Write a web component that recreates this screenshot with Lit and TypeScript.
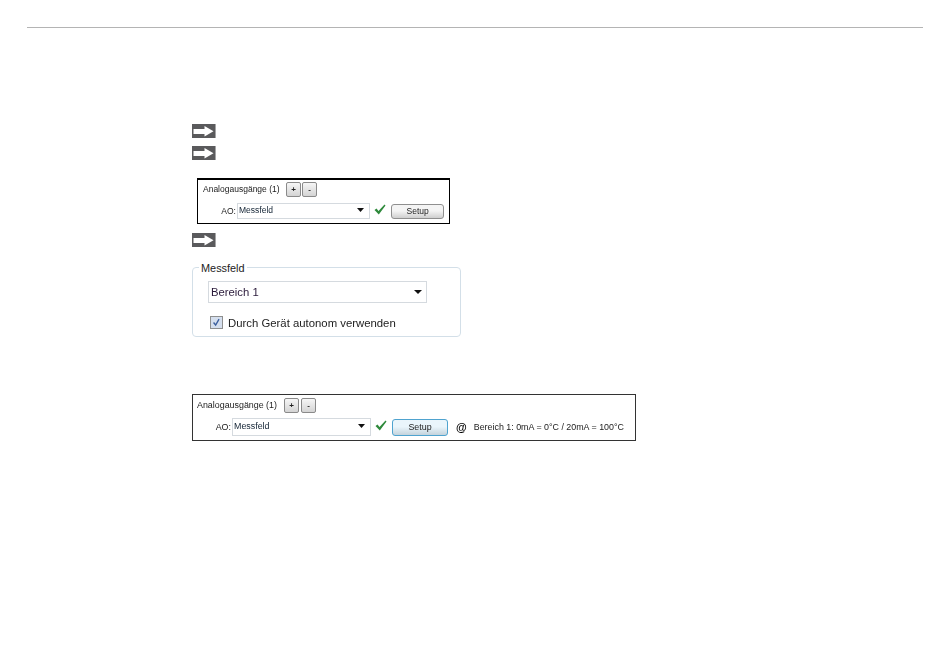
import { LitElement, html, css, svg } from 'lit';
import { customElement, property } from 'lit/decorators.js';

const caret = svg`<svg class="caret" width="7" height="4" viewBox="0 0 7 4"><path d="M0 0h7L3.5 4z" fill="#111"/></svg>`;

@customElement('step-arrow')
export class StepArrow extends LitElement {
  static override styles = css`
    :host {
      display: block;
      width: 24px;
      height: 14px;
    }
    svg {
      display: block;
    }
  `;

  protected override render() {
    return html`<svg width="24" height="14" viewBox="0 0 24 14">
      <rect width="24" height="14" fill="#5a5a5c" />
      <rect x="23" width="1" height="14" fill="#a5a5a6" />
      <path d="M1.5 5h11V2l9 5.2-9 5.3V10h-11z" fill="#fff" />
    </svg>`;
  }
}

@customElement('ao-panel')
export class AoPanel extends LitElement {
  @property({ type: Boolean, reflect: true }) wide = false;

  static override styles = css`
    :host {
      display: block;
      box-sizing: border-box;
      width: 253px;
      height: 46px;
      padding: 2px 5px 0 5px;
      border: 1px solid #000;
      border-top-width: 2px;
      font: 8.5px 'Liberation Sans', Arial, sans-serif;
      color: #222;
      background: #fff;
    }
    :host([wide]) {
      width: 444px;
      height: 47px;
      padding: 3px 4px 0 4px;
      border-width: 1px;
      border-color: #333;
      font-size: 8.9px;
    }
    .top {
      display: flex;
      align-items: center;
      height: 15px;
    }
    .title {
      width: 83px;
      padding-bottom: 1px;
    }
    :host([wide]) .title {
      width: 87px;
    }
    .mini {
      box-sizing: border-box;
      width: 15px;
      height: 15px;
      margin-right: 1px;
      border: 1px solid #8a8a8a;
      border-radius: 2px;
      background: linear-gradient(#f6f6f6, #d4d4d4);
      display: flex;
      align-items: center;
      justify-content: center;
      font-weight: bold;
      font-size: 8px;
      line-height: 1;
    }
    :host([wide]) .mini {
      margin-right: 2px;
    }
    .bottom {
      display: flex;
      align-items: center;
      height: 18px;
      margin-top: 5px;
    }
    .ao {
      width: 33px;
      text-align: right;
      flex: none;
    }
    :host([wide]) .ao {
      width: 34px;
    }
    .combo {
      box-sizing: border-box;
      width: 134px;
      height: 16px;
      margin-left: 1px;
      padding: 0 5px 3px 1px;
      border: 1px solid #d5dadf;
      display: flex;
      align-items: center;
      justify-content: space-between;
      color: #123;
    }
    :host([wide]) .combo {
      width: 139px;
      height: 18px;
    }
    .check {
      margin: 0 5px 3px 4px;
      flex: none;
    }
    .setup {
      box-sizing: border-box;
      width: 53px;
      height: 15px;
      border: 1px solid #8f8f8f;
      border-radius: 3px;
      background: linear-gradient(#f4f4f4 45%, #cfcfcf);
      text-align: center;
      line-height: 13px;
    }
    :host([wide]) .setup {
      width: 56px;
      height: 17px;
      line-height: 15px;
      border: 1px solid #4fa3cf;
      background: linear-gradient(#eaf5fb 45%, #c4d3dc);
    }
    .at {
      margin: 0 7px 0 8px;
      font-weight: bold;
      font-size: 11px;
      color: #000;
    }
  `;

  protected override render() {
    return html`
      <div class="top">
        <span class="title">Analogausgänge (1)</span>
        <span class="mini">+</span>
        <span class="mini">-</span>
      </div>
      <div class="bottom">
        <span class="ao">AO:</span>
        <div class="combo"><span>Messfeld</span>${caret}</div>
        <svg class="check" width="12" height="11" viewBox="0 0 12 11">
          <path d="M0.5 6 L2.5 4.5 L4.5 7 L10.5 0.5 L11.5 1.5 L4.8 10.5 Z" fill="#2f8a3c" />
        </svg>
        <div class="setup">Setup</div>
        ${this.wide
          ? html`<span class="at">@</span><span>Bereich 1: 0mA = 0°C / 20mA = 100°C</span>`
          : ''}
      </div>
    `;
  }
}

@customElement('app-root')
export class AppRoot extends LitElement {
  static override styles = css`
    :host {
      display: block;
      width: 950px;
      height: 657px;
      background: #fff;
      overflow: hidden;
      font-family: 'Liberation Sans', Arial, sans-serif;
    }
    .rule {
      height: 1px;
      margin: 27px 27px 0;
      background: #b4b4b4;
    }
    main {
      padding: 96px 0 0 192px;
      filter: blur(0.4px);
    }
    step-arrow + step-arrow {
      margin-top: 8px;
    }
    .first {
      margin: 18px 0 9px 5px;
    }
    .group {
      position: relative;
      box-sizing: border-box;
      width: 269px;
      height: 70px;
      margin-top: 20px;
      padding: 13px 0 0 15px;
      border: 1px solid #d3dfe8;
      border-radius: 4px;
    }
    .legend {
      position: absolute;
      top: -6px;
      left: 6px;
      padding: 0 2px;
      background: #fff;
      font-size: 10.9px;
      line-height: 13px;
      color: #222;
    }
    .select {
      box-sizing: border-box;
      width: 219px;
      height: 22px;
      padding: 0 4px 0 2px;
      border: 1px solid #d5dadf;
      display: flex;
      align-items: center;
      justify-content: space-between;
      font-size: 11.3px;
      color: #2a1a3a;
    }
    .opt {
      display: flex;
      align-items: center;
      gap: 5px;
      margin: 13px 0 0 2px;
      font-size: 11.35px;
      color: #222;
    }
    .box {
      box-sizing: border-box;
      width: 13px;
      height: 13px;
      border: 1px solid #8e8f8f;
      background: #d5dfee;
      display: block;
    }
    .second {
      margin-top: 57px;
    }
  `;

  protected override render() {
    return html`
      <div class="rule"></div>
      <main>
        <step-arrow></step-arrow>
        <step-arrow></step-arrow>
        <ao-panel class="first"></ao-panel>
        <step-arrow></step-arrow>
        <section class="group">
          <span class="legend">Messfeld</span>
          <div class="select">
            <span>Bereich 1</span>
            <svg width="8" height="4" viewBox="0 0 8 4"><path d="M0 0h8L4 4z" fill="#111" /></svg>
          </div>
          <div class="opt">
            <svg class="box" viewBox="0 0 13 13">
              <path d="M3 6.5 L5.5 9.5 L9.5 2.5" fill="none" stroke="#3b5f9e" stroke-width="1.6" />
            </svg>
            <span>Durch Gerät autonom verwenden</span>
          </div>
        </section>
        <ao-panel class="second" wide></ao-panel>
      </main>
    `;
  }
}
